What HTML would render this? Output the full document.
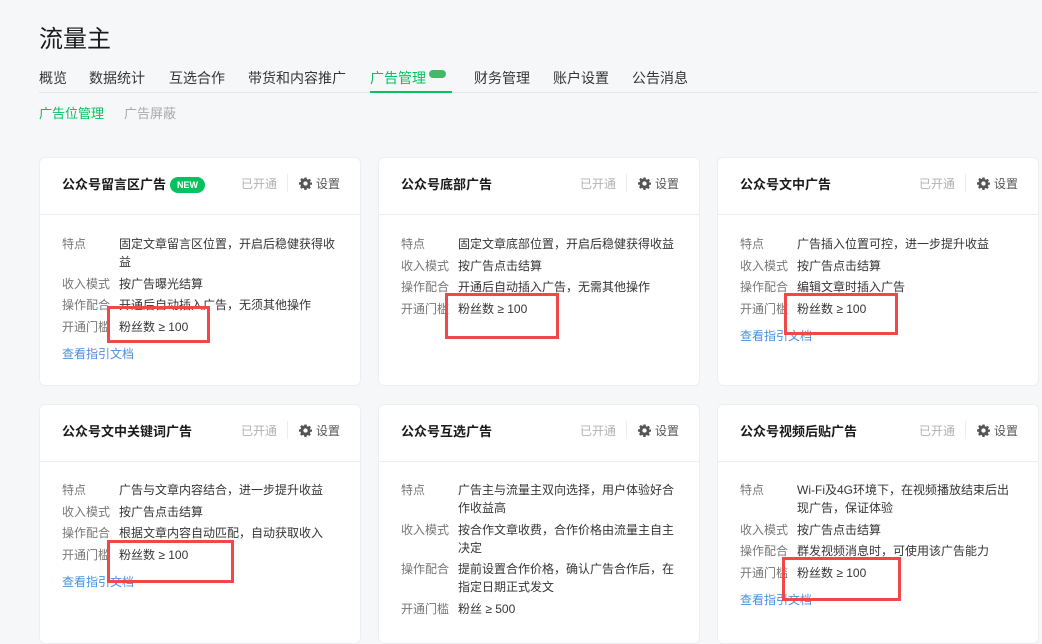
<!DOCTYPE html>
<html><head><meta charset="utf-8"><style>
*{margin:0;padding:0;box-sizing:border-box}
body{width:1042px;height:623px;overflow:hidden;background:#f6f7f9;font-family:"Liberation Sans","Noto Sans CJK SC",sans-serif;color:#353535;position:relative}
.title{position:absolute;left:39px;top:19px;font-size:24px;color:#1a1a1a}
.tabs{position:absolute;left:39px;top:68px;width:999px;height:25px;border-bottom:1px solid #e4e6ea;font-size:14px}
.tabs span{position:absolute;top:0;white-space:nowrap}
.tabs .on{color:#07c160}
.ul{position:absolute;left:370px;top:91px;width:82px;height:2px;background:#07c160}
.nb{display:inline-block;width:17px;height:8px;border-radius:4px;background:#47b868;vertical-align:top;margin:2px 0 0 3px}
.sub{position:absolute;top:103px;font-size:13px}
.card{position:absolute;width:322px;background:#fff;border-radius:6px;border:1px solid #eceef1}
.hd{height:57px;border-bottom:1px solid #eceef1;position:relative}
.hd .t{position:absolute;left:22px;top:18px;font-size:13px;font-weight:bold;color:#1a1a1a;line-height:18px}
.new{display:inline-block;background:#07c160;color:#fff;font-size:9px;font-weight:bold;border-radius:9px;padding:0 7px;height:16px;line-height:16px;vertical-align:1px;margin-left:4px}
.hd .st{position:absolute;left:201px;top:17px;font-size:12px;color:#b2b2b2}
.hd .sep{position:absolute;left:247px;top:16px;width:1px;height:18px;background:#eceef1}
.hd .set{position:absolute;left:259px;top:17px;font-size:12px;color:#555}
.hd .set svg{vertical-align:-2px;margin-right:4px}
.bd{padding:20px 0 0 22px;font-size:12px}
.r{display:flex;line-height:18px;margin-bottom:3.5px}
.r .k{width:57px;color:#777;flex:none}
.r .v{width:220px;color:#353535}
.lk{color:#4a8fe0;margin-top:9px;font-size:12px}
.box{position:absolute;border:3px solid #f0474b}
</style></head><body>
<div class="title">流量主</div>
<div class="tabs">
<span style="left:0">概览</span><span style="left:50px">数据统计</span><span style="left:130px">互选合作</span><span style="left:209px">带货和内容推广</span><span class="on" style="left:331px">广告管理<i class="nb"></i></span><span style="left:435px">财务管理</span><span style="left:514px">账户设置</span><span style="left:593px">公告消息</span>
</div>
<div class="ul"></div>
<div class="sub" style="left:39px;color:#07c160">广告位管理</div>
<div class="sub" style="left:124px;color:#aaa">广告屏蔽</div>

<svg width="0" height="0" style="position:absolute"><defs><symbol id="g" viewBox="0 0 24 24"><path fill="#555" d="M10 1h4l.6 3.1 2 .9 2.7-1.8 2.8 2.8-1.8 2.7.9 2L24 10v4l-3.1.6-.9 2 1.8 2.7-2.8 2.8-2.7-1.8-2 .9L14 24h-4l-.6-3.1-2-.9-2.7 1.8-2.8-2.8 1.8-2.7-.9-2L0 14v-4l3.1-.6.9-2-1.8-2.7 2.8-2.8 2.7 1.8 2-.9zM12 8a4 4 0 100 8 4 4 0 000-8z"/></symbol></defs></svg>

<div class="card" style="left:39px;top:157px;height:229px">
<div class="hd"><div class="t">公众号留言区广告<span class="new">NEW</span></div><div class="st">已开通</div><div class="sep"></div><div class="set"><svg width="13" height="13"><use href="#g"/></svg>设置</div></div>
<div class="bd">
<div class="r"><div class="k">特点</div><div class="v">固定文章留言区位置，开启后稳健获得收益</div></div>
<div class="r"><div class="k">收入模式</div><div class="v">按广告曝光结算</div></div>
<div class="r"><div class="k">操作配合</div><div class="v">开通后自动插入广告，无须其他操作</div></div>
<div class="r"><div class="k">开通门槛</div><div class="v">粉丝数 ≥ 100</div></div>
<div class="lk">查看指引文档</div></div></div>

<div class="card" style="left:378px;top:157px;height:229px">
<div class="hd"><div class="t">公众号底部广告</div><div class="st">已开通</div><div class="sep"></div><div class="set"><svg width="13" height="13"><use href="#g"/></svg>设置</div></div>
<div class="bd">
<div class="r"><div class="k">特点</div><div class="v">固定文章底部位置，开启后稳健获得收益</div></div>
<div class="r"><div class="k">收入模式</div><div class="v">按广告点击结算</div></div>
<div class="r"><div class="k">操作配合</div><div class="v">开通后自动插入广告，无需其他操作</div></div>
<div class="r"><div class="k">开通门槛</div><div class="v">粉丝数 ≥ 100</div></div>
</div></div>

<div class="card" style="left:717px;top:157px;height:229px">
<div class="hd"><div class="t">公众号文中广告</div><div class="st">已开通</div><div class="sep"></div><div class="set"><svg width="13" height="13"><use href="#g"/></svg>设置</div></div>
<div class="bd">
<div class="r"><div class="k">特点</div><div class="v">广告插入位置可控，进一步提升收益</div></div>
<div class="r"><div class="k">收入模式</div><div class="v">按广告点击结算</div></div>
<div class="r"><div class="k">操作配合</div><div class="v">编辑文章时插入广告</div></div>
<div class="r"><div class="k">开通门槛</div><div class="v">粉丝数 ≥ 100</div></div>
<div class="lk">查看指引文档</div></div></div>

<div class="card" style="left:39px;top:404px;height:240px">
<div class="hd"><div class="t">公众号文中关键词广告</div><div class="st">已开通</div><div class="sep"></div><div class="set"><svg width="13" height="13"><use href="#g"/></svg>设置</div></div>
<div class="bd" style="padding-top:19px">
<div class="r"><div class="k">特点</div><div class="v">广告与文章内容结合，进一步提升收益</div></div>
<div class="r"><div class="k">收入模式</div><div class="v">按广告点击结算</div></div>
<div class="r"><div class="k">操作配合</div><div class="v">根据文章内容自动匹配，自动获取收入</div></div>
<div class="r"><div class="k">开通门槛</div><div class="v">粉丝数 ≥ 100</div></div>
<div class="lk">查看指引文档</div></div></div>

<div class="card" style="left:378px;top:404px;height:240px">
<div class="hd"><div class="t">公众号互选广告</div><div class="st">已开通</div><div class="sep"></div><div class="set"><svg width="13" height="13"><use href="#g"/></svg>设置</div></div>
<div class="bd" style="padding-top:19px">
<div class="r"><div class="k">特点</div><div class="v">广告主与流量主双向选择，用户体验好合作收益高</div></div>
<div class="r"><div class="k">收入模式</div><div class="v">按合作文章收费，合作价格由流量主自主决定</div></div>
<div class="r"><div class="k">操作配合</div><div class="v">提前设置合作价格，确认广告合作后，在指定日期正式发文</div></div>
<div class="r"><div class="k">开通门槛</div><div class="v">粉丝 ≥ 500</div></div>
</div></div>

<div class="card" style="left:717px;top:404px;height:240px">
<div class="hd"><div class="t">公众号视频后贴广告</div><div class="st">已开通</div><div class="sep"></div><div class="set"><svg width="13" height="13"><use href="#g"/></svg>设置</div></div>
<div class="bd" style="padding-top:19px">
<div class="r"><div class="k">特点</div><div class="v">Wi-Fi及4G环境下，在视频播放结束后出现广告，保证体验</div></div>
<div class="r"><div class="k">收入模式</div><div class="v">按广告点击结算</div></div>
<div class="r"><div class="k">操作配合</div><div class="v">群发视频消息时，可使用该广告能力</div></div>
<div class="r"><div class="k">开通门槛</div><div class="v">粉丝数 ≥ 100</div></div>
<div class="lk">查看指引文档</div></div></div>

<div class="box" style="left:107px;top:306px;width:103px;height:37px"></div>
<div class="box" style="left:445px;top:293px;width:114px;height:46px"></div>
<div class="box" style="left:784px;top:293px;width:114px;height:42px"></div>
<div class="box" style="left:107px;top:540px;width:127px;height:43px"></div>
<div class="box" style="left:782px;top:557px;width:119px;height:44px"></div>
</body></html>
